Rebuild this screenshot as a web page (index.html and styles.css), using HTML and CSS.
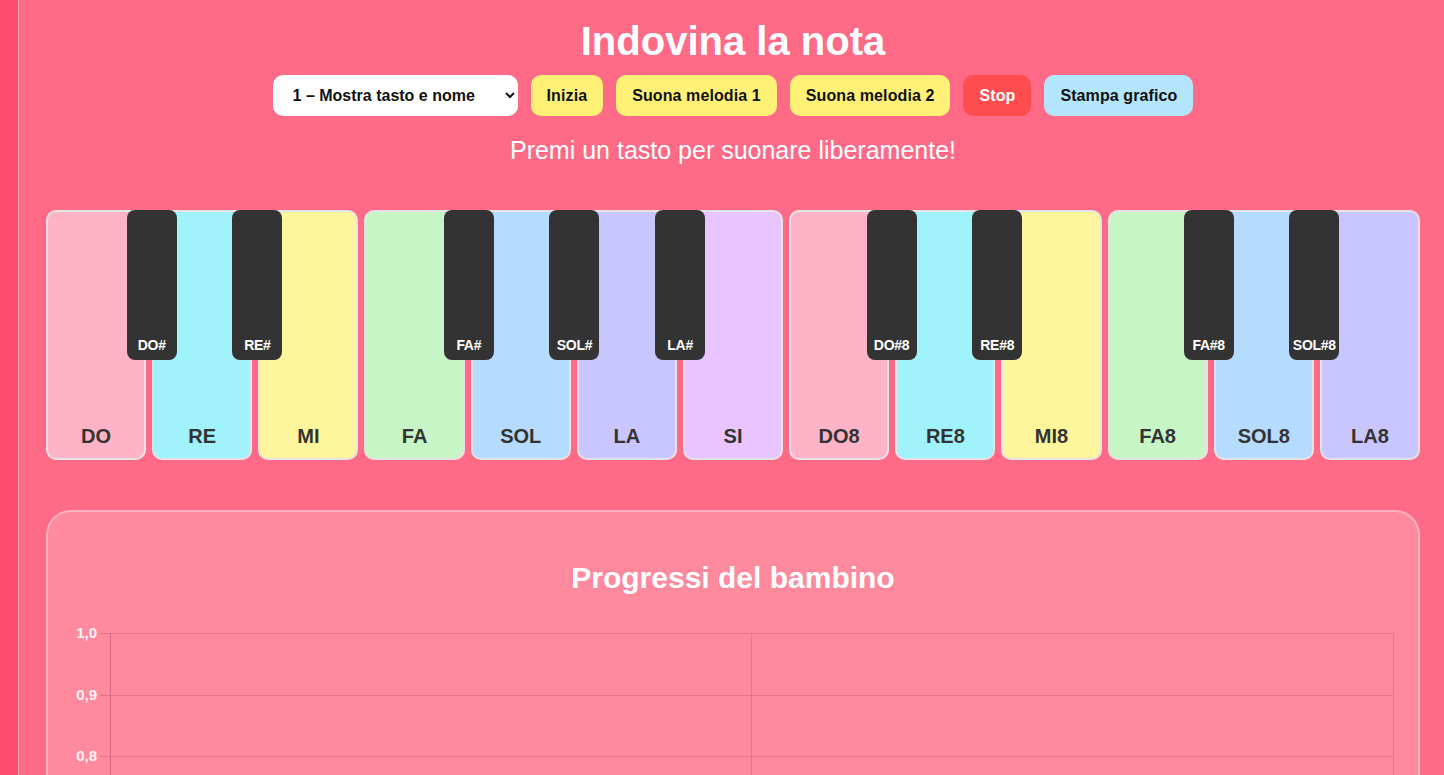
FILE: index.html
```html
<!DOCTYPE html>
<html lang="it">
<head>
<meta charset="utf-8">
<title>Indovina la nota</title>
<link rel="stylesheet" href="styles.css">
</head>
<body>
<div class="page">
  <div class="side"></div>
  <main class="main">
    <h1 class="title">Indovina la nota</h1>
    <div class="controls">
      <select class="mode">
        <option>1 – Mostra tasto e nome</option>
        <option>2 – Mostra solo tasto</option>
        <option>3 – Solo suono</option>
      </select>
      <button class="btn btn-yellow">Inizia</button>
      <button class="btn btn-yellow">Suona melodia 1</button>
      <button class="btn btn-yellow">Suona melodia 2</button>
      <button class="btn btn-red">Stop</button>
      <button class="btn btn-blue">Stampa grafico</button>
    </div>
    <p class="hint">Premi un tasto per suonare liberamente!</p>

    <div class="piano">
      <div class="key c-do"><span class="label">DO</span></div>
      <div class="key c-re"><span class="label">RE</span></div>
      <div class="key c-mi"><span class="label">MI</span></div>
      <div class="key c-fa"><span class="label">FA</span></div>
      <div class="key c-sol"><span class="label">SOL</span></div>
      <div class="key c-la"><span class="label">LA</span></div>
      <div class="key c-si"><span class="label">SI</span></div>
      <div class="key c-do"><span class="label">DO8</span></div>
      <div class="key c-re"><span class="label">RE8</span></div>
      <div class="key c-mi"><span class="label">MI8</span></div>
      <div class="key c-fa"><span class="label">FA8</span></div>
      <div class="key c-sol"><span class="label">SOL8</span></div>
      <div class="key c-la"><span class="label">LA8</span></div>

      <span class="black" style="left: calc(1 * 100% / 13 - 25px)">DO#</span>
      <span class="black" style="left: calc(2 * 100% / 13 - 25px)">RE#</span>
      <span class="black" style="left: calc(4 * 100% / 13 - 25px)">FA#</span>
      <span class="black" style="left: calc(5 * 100% / 13 - 25px)">SOL#</span>
      <span class="black" style="left: calc(6 * 100% / 13 - 25px)">LA#</span>
      <span class="black" style="left: calc(8 * 100% / 13 - 25px)">DO#8</span>
      <span class="black" style="left: calc(9 * 100% / 13 - 25px)">RE#8</span>
      <span class="black" style="left: calc(11 * 100% / 13 - 25px)">FA#8</span>
      <span class="black" style="left: calc(12 * 100% / 13 - 25px)">SOL#8</span>
    </div>

    <section class="card">
      <h2 class="card-title">Progressi del bambino</h2>
      <div class="chart">
        <div class="ylabels">
          <span>1,0</span><span>0,9</span><span>0,8</span><span>0,7</span><span>0,6</span><span>0,5</span>
        </div>
        <div class="plot">
          <div class="row"></div><div class="row"></div><div class="row"></div><div class="row"></div><div class="row"></div>
        </div>
      </div>
    </section>
  </main>
</div>
</body>
</html>
```

FILE: styles.css
```css
* { box-sizing: border-box; }
html, body {
  margin: 0;
  height: 100%;
  overflow: hidden;
}
body {
  background: #ff6b87;
  font-family: "Liberation Sans", Arial, sans-serif;
}
.page {
  display: flex;
  min-height: 100%;
}
.side {
  width: 19px;
  flex: none;
  background: #ff4b6d;
  border-right: 1px solid #ffa6b8;
}
.main {
  flex: 1;
  padding: 0 24px 0 27px;
}
.title {
  margin: 18px 0 0;
  text-align: center;
  color: #fff;
  font-size: 40px;
  line-height: 46px;
  font-weight: bold;
}
.controls {
  display: flex;
  justify-content: center;
  gap: 13px;
  margin-top: 11px;
}
.mode {
  width: 245px;
  height: 41px;
  border: none;
  border-radius: 10px;
  background: #fff;
  color: #111;
  font-family: "Liberation Sans", Arial, sans-serif;
  font-weight: bold;
  font-size: 16px;
  padding: 0 8px 0 16px;
}
.btn {
  height: 41px;
  border: none;
  border-radius: 10px;
  padding: 0 16px;
  font-family: "Liberation Sans", Arial, sans-serif;
  font-weight: bold;
  font-size: 16px;
  letter-spacing: 0.1px;
  color: #111;
}
.btn-yellow { background: #fff176; }
.btn-red { background: #ff4d4f; color: #fff; }
.btn-blue { background: #b3e5fc; }
.hint {
  margin: 20px 0 0;
  text-align: center;
  color: #fff;
  font-size: 25px;
  line-height: 28px;
}
.piano {
  position: relative;
  display: flex;
  gap: 6px;
  margin-top: 46px;
  height: 250px;
}
.key {
  flex: 1;
  border: 2px solid #e6e3e6;
  border-radius: 10px;
  display: flex;
  align-items: flex-end;
  justify-content: center;
  padding-bottom: 10px;
}
.label {
  font-size: 20px;
  font-weight: bold;
  color: #333;
}
.black {
  position: absolute;
  z-index: 2;
  top: 0;
  width: 50px;
  height: 150px;
  background: #333;
  border-radius: 8px;
  color: #fff;
  font-size: 14px;
  font-weight: bold;
  display: flex;
  align-items: flex-end;
  justify-content: center;
  padding-bottom: 7px;
  letter-spacing: -0.3px;
  white-space: nowrap;
}
.c-do { background: #ffb3c6; }
.c-re { background: #a0f2fb; }
.c-mi { background: #fff59d; }
.c-fa { background: #c8f5c6; }
.c-sol { background: #b5dbff; }
.c-la { background: #c8c5ff; }
.c-si { background: #e8c5ff; }
.card {
  margin-top: 50px;
  border: 2px solid #ffb1c0;
  border-radius: 25px;
  background: #ff8a9d;
  padding: 36px 24px 40px 0;
}
.card-title {
  margin: 13px 0 0 24px;
  text-align: center;
  color: #fff;
  font-size: 30px;
  line-height: 34px;
  font-weight: bold;
}
.chart {
  display: flex;
  margin-top: 38px;
}
.ylabels {
  width: 62px;
  flex: none;
  display: flex;
  flex-direction: column;
  margin-top: -8px;
}
.ylabels span {
  height: 61.5px;
  font-size: 15px;
  font-weight: bold;
  line-height: 16px;
  color: #fff2f5;
  text-align: right;
  padding-right: 13px;
  background: linear-gradient(rgba(140, 40, 70, 0.25), rgba(140, 40, 70, 0.25)) no-repeat right 0 top 8px / 10px 1px;
}
.plot {
  flex: 1;
  border-left: 1px solid rgba(140, 40, 70, 0.35);
  border-right: 1px solid rgba(140, 40, 70, 0.2);
  background: linear-gradient(to right, transparent calc(50% - 0.5px), rgba(140,40,70,0.2) calc(50% - 0.5px), rgba(140,40,70,0.2) calc(50% + 0.5px), transparent calc(50% + 0.5px));
}
.row {
  height: 61.5px;
  border-top: 1px solid rgba(140, 40, 70, 0.2);
}
```
